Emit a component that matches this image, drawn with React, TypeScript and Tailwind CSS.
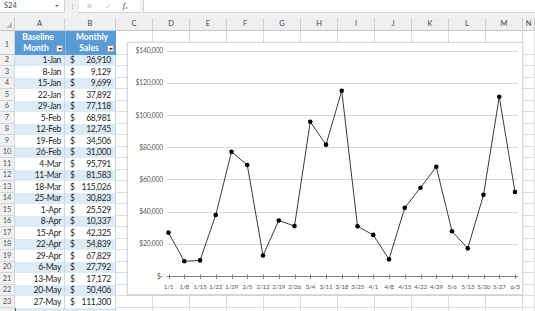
import React from "react";

const COLS = "grid grid-cols-[15px_50px_51px_repeat(11,37px)_1fr]";
const LETTERS = ["C", "D", "E", "F", "G", "H", "I", "J", "K", "L", "M", "N"];

const sales: [string, string][] = [
  ["1-Jan", "26,910"],
  ["8-Jan", "9,129"],
  ["15-Jan", "9,699"],
  ["22-Jan", "37,892"],
  ["29-Jan", "77,118"],
  ["5-Feb", "68,981"],
  ["12-Feb", "12,745"],
  ["19-Feb", "34,506"],
  ["26-Feb", "31,000"],
  ["4-Mar", "95,791"],
  ["11-Mar", "81,583"],
  ["18-Mar", "115,026"],
  ["25-Mar", "30,823"],
  ["1-Apr", "25,529"],
  ["8-Apr", "10,337"],
  ["15-Apr", "42,325"],
  ["22-Apr", "54,839"],
  ["29-Apr", "67,829"],
  ["6-May", "27,792"],
  ["13-May", "17,172"],
  ["20-May", "50,406"],
  ["27-May", "111,300"],
];

const points = [
  26910, 9129, 9699, 37892, 77118, 68981, 12745, 34506, 31000, 95791, 81583,
  115026, 30823, 25529, 10337, 42325, 54839, 67829, 27792, 17172, 50406,
  111300, 52200,
];
const labels = [
  "1/1", "1/8", "1/15", "1/22", "1/29", "2/5", "2/12", "2/19", "2/26", "3/4",
  "3/11", "3/18", "3/25", "4/1", "4/8", "4/15", "4/22", "4/29", "5/6", "5/13",
  "5/20", "5/27", "6/3",
];

const px = (i: number) => 168.5 + i * 15.75;
const py = (v: number) => 276 - (v / 20000) * 32.2;

function EmptyCells() {
  return (
    <>
      {LETTERS.map((l) => (
        <div key={l} className="border-r border-b border-[#dcdcdc]" />
      ))}
    </>
  );
}

function FilterButton() {
  return (
    <span className="absolute right-[2px] bottom-[3px] flex h-[7px] w-[7px] items-center justify-center border border-[#a6a6a6] bg-[#f2f2f2]">
      <span className="h-0 w-0 border-x-[2px] border-t-[2.5px] border-x-transparent border-t-[#333]" />
    </span>
  );
}

function Chart() {
  const path = points.map((v, i) => `${i === 0 ? "M" : "L"}${px(i)},${py(v)}`).join(" ");
  const grid = [20000, 40000, 60000, 80000, 100000, 120000, 140000];
  const yLabels = ["$-", "$20,000", "$40,000", "$60,000", "$80,000", "$100,000", "$120,000", "$140,000"];
  return (
    <div className="absolute left-[127px] top-[42px] h-[253px] w-[396px] bg-white shadow-[0_0_1px_rgba(0,0,0,0.25)]">
      <svg width="396" height="253" viewBox="127 42 396 253" className="block">
        <rect x="127.5" y="42.5" width="395" height="252" fill="white" stroke="#d9d9d9" />
        {grid.map((g) => (
          <line key={g} x1="167" x2="518" y1={Math.round(py(g)) + 0.5} y2={Math.round(py(g)) + 0.5} stroke="#d9d9d9" />
        ))}
        {yLabels.map((t, i) => (
          <text
            key={t}
            x="163"
            y={py(i * 20000) + 2.5}
            textAnchor="end"
            fontSize="6.8"
            fill="#595959"
            letterSpacing="-0.2"
            fontFamily="Lato, 'Liberation Sans', sans-serif"
          >
            {t}
          </text>
        ))}
        <line x1="167" x2="518" y1="276.5" y2="276.5" stroke="#7f7f7f" />
        {labels.map((l, i) => (
          <g key={l}>
            <line x1={Math.round(px(i)) + 0.5} x2={Math.round(px(i)) + 0.5} y1="274.5" y2="279" stroke="#7f7f7f" />
            <text
              x={px(i)}
              y="289"
              textAnchor="middle"
              fontSize="6.5"
              fill="#595959"
              letterSpacing="-0.35"
              fontFamily="Lato, 'Liberation Sans', sans-serif"
            >
              {l}
            </text>
          </g>
        ))}
        <path d={path} fill="none" stroke="#3a3a3a" strokeWidth="1" strokeLinejoin="round" />
        {points.map((v, i) => (
          <circle key={i} cx={px(i)} cy={py(v)} r="2.3" fill="#000" />
        ))}
      </svg>
    </div>
  );
}

export default function App() {
  return (
    <div className="relative h-[311px] w-[535px] overflow-hidden bg-white font-['Lato','Liberation_Sans',sans-serif] text-[#222]">
      {/* formula bar */}
      <div className="flex h-[18px] items-start bg-[#f1f1f1]">
        <div className="flex h-[13px] w-[65px] items-center justify-between border-r border-b border-[#d4d4d4] bg-white pl-[4px] pr-[5px] text-[7.5px] text-[#444]">
          <span>S24</span>
          <span className="h-0 w-0 border-x-[2px] border-t-[2.5px] border-x-transparent border-t-[#666]" />
        </div>
        <div className="flex h-[13px] w-[14px] flex-col items-center justify-center gap-[1px]">
          <span className="h-[1px] w-[1px] bg-[#aaa]" />
          <span className="h-[1px] w-[1px] bg-[#aaa]" />
          <span className="h-[1px] w-[1px] bg-[#aaa]" />
        </div>
        <div className="flex h-[13px] w-[61px] items-center border-b border-[#d4d4d4] bg-white text-[8px]">
          <span className="ml-[7px] text-[#c4c4c4]">✕</span>
          <span className="ml-[12px] text-[#c4c4c4]">✓</span>
          <span className="ml-[11px] font-['Liberation_Serif',serif] text-[8px] italic text-[#444]">
            f<sub className="text-[5px]">x</sub>
          </span>
        </div>
        <div className="ml-[3px] h-[13px] flex-1 border-b border-l border-[#d4d4d4] bg-white" />
      </div>

      {/* column headers */}
      <div className={`${COLS} h-[13px] border-b border-[#c8c8c8] bg-[#efefef] text-[7.5px] text-[#444]`}>
        <div className="relative border-r border-[#d0d0d0]">
          <svg className="absolute bottom-[2px] right-[2px]" width="6" height="6" viewBox="0 0 6 6">
            <polygon points="6,0 6,6 0,6" fill="#bdbdbd" />
          </svg>
        </div>
        {["A", "B", ...LETTERS].map((l) => (
          <div key={l} className="flex items-center justify-center border-r border-[#d0d0d0]">
            {l}
          </div>
        ))}
      </div>

      {/* row 1: table header */}
      <div className={`${COLS} h-[24px]`}>
        <div className="flex items-end justify-center border-r border-b border-[#d0d0d0] bg-[#f1f1f1] pb-[4px] text-[7.5px] text-[#555]">
          1
        </div>
        <div className="relative flex flex-col items-center justify-center bg-[#5b9bd5] pr-[4px] text-[8.5px] font-bold leading-[11px] text-white">
          <span>Baseline</span>
          <span className="-ml-[4px]">Month</span>
          <FilterButton />
        </div>
        <div className="relative flex flex-col items-center justify-center border-l border-[#7fb0de] bg-[#5b9bd5] text-[8.5px] font-bold leading-[11px] text-white">
          <span className="ml-[2px]">Monthly</span>
          <span className="-ml-[4px]">Sales</span>
          <FilterButton />
        </div>
        <EmptyCells />
      </div>

      {/* data rows */}
      {sales.map(([d, v], i) => {
        const r = i + 2;
        const band = r % 2 === 0;
        return (
          <div key={r} className={`${COLS} ${band ? "h-[11px]" : "h-[12px]"} text-[8.5px] leading-none tracking-[-0.3px] text-[#262626]`}>
            <div className="flex items-center justify-center border-r border-b border-[#d6d6d6] bg-[#f1f1f1] text-[7.5px] tracking-normal text-[#555]">
              {r}
            </div>
            <div className={`flex items-center justify-end border-r border-[#c9d9ec] pr-[3px] ${band ? "bg-[#ddebf7]" : "bg-white"}`}>
              {d}
            </div>
            <div className={`flex items-center justify-between border-r border-[#c9d9ec] pl-[5px] pr-[4px] ${band ? "bg-[#ddebf7]" : "bg-white"}`}>
              <span>$</span>
              <span>{v}</span>
            </div>
            <EmptyCells />
          </div>
        );
      })}

      {/* row 24, cut off at the window's edge */}
      <div className={`${COLS} h-[11px]`}>
        <div className="border-r border-[#d6d6d6] bg-[#f1f1f1]" />
        <div className="border-l border-[#217346] border-r border-r-[#c9d9ec] bg-[#ddebf7]" />
        <div className="border-r border-[#c9d9ec] bg-[#ddebf7]" />
        <EmptyCells />
      </div>

      <Chart />
    </div>
  );
}
